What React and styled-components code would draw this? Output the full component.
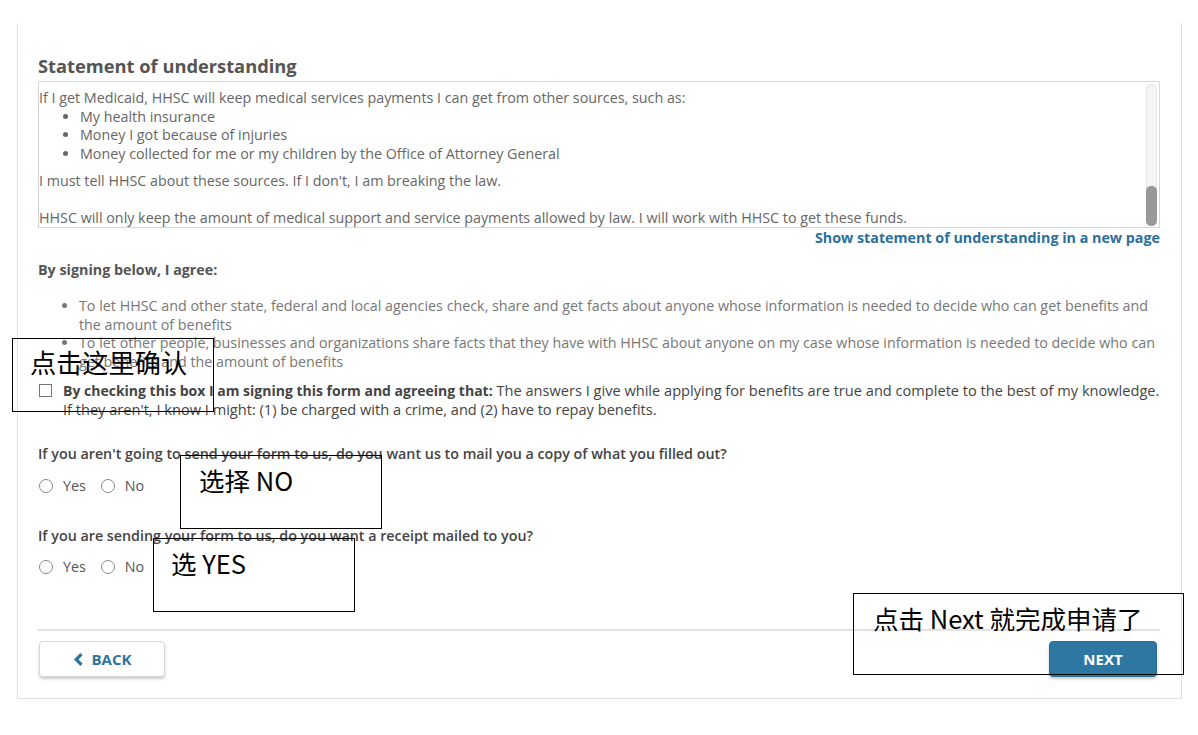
import React from 'react'
import styled, { createGlobalStyle } from 'styled-components'

const GlobalStyle = createGlobalStyle`
  html, body {
    margin: 0;
    padding: 0;
    background: #fff;
  }
  body {
    font-family: 'Open Sans', 'Noto Sans', 'Noto Sans CJK SC', sans-serif;
    color: #555;
  }
`

const Page = styled.div`
  position: relative;
  width: 1198px;
  height: 735px;
  overflow: hidden;
`

const Panel = styled.div`
  margin: 23px 0 0 17px;
  width: 1165px;
  height: 676px;
  box-sizing: border-box;
  border: 1px solid #e0e0e0;
  border-top: none;
  padding: 30px 21px 0 20px;
`

const Title = styled.h2`
  margin: 0 0 2px;
  font-size: 18.3px;
  font-weight: 700;
  color: #555;
  line-height: 26px;
`

const StatementBox = styled.div`
  position: relative;
  height: 147px;
  box-sizing: border-box;
  border: 1px solid #d6d6d6;
  font-size: 14.3px;
  color: #666;
  line-height: 18.7px;
  overflow: hidden;
  padding: 7px 20px 0 0;
`

const Para = styled.p`
  margin: 0 0 ${(p) => p.gap || 0}px;
`

const SmallList = styled.ul`
  margin: 0 0 8px;
  padding-left: 41px;
  list-style: disc;
`

const ScrollTrack = styled.div`
  position: absolute;
  top: 2px;
  right: 2px;
  bottom: 1px;
  width: 9px;
  border: 1px solid #e4e4e4;
  border-radius: 5px;
  background: #f4f4f4;
`

const ScrollThumb = styled.div`
  position: absolute;
  left: -1px;
  right: -1px;
  bottom: -1px;
  height: 40px;
  border-radius: 5px;
  background: #999;
`

const NewPageLink = styled.a`
  display: block;
  text-align: right;
  font-size: 14.3px;
  font-weight: 700;
  color: #2b6f9b;
  text-decoration: none;
  line-height: 20px;
`

const AgreeHeading = styled.div`
  margin-top: 13px;
  font-size: 14.3px;
  font-weight: 700;
  color: #555;
  line-height: 18px;
`

const AgreeList = styled.ul`
  margin: 18px 0 0;
  padding-left: 41px;
  font-size: 14.3px;
  color: #777;
  line-height: 18.5px;
`

const CheckRow = styled.label`
  display: flex;
  align-items: flex-start;
  gap: 11px;
  margin-top: 10px;
  padding-left: 1px;
  font-size: 14.6px;
  color: #444;
  line-height: 19px;

  b {
    font-size: 14px;
  }
`

const CheckText = styled.span`
  margin-right: -9px;
`

const Box = styled.span`
  flex: none;
  width: 13px;
  height: 13px;
  margin-top: 3px;
  border: 1px solid #777;
  box-sizing: border-box;
  background: #fff;
`

const Question = styled.div`
  margin-top: ${(p) => p.top}px;
  font-size: 14.3px;
  font-weight: 600;
  color: #444;
  line-height: 18px;
`

const RadioRow = styled.div`
  display: flex;
  align-items: center;
  margin-top: ${(p) => p.top}px;
  padding-left: 1px;
  font-size: 14.3px;
  color: #555;
`

const Radio = styled.span`
  width: 14px;
  height: 14px;
  border-radius: 50%;
  border: 1px solid #8a8a8a;
  box-sizing: border-box;
  margin-right: 10px;
`

const RadioLabel = styled.span`
  margin-right: 15px;
`

const Divider = styled.hr`
  margin: 53px 0 0;
  border: none;
  border-top: 2px solid #e2e2e2;
`

const Footer = styled.div`
  display: flex;
  justify-content: space-between;
  margin-top: 10px;
  padding: 0 3px 0 1px;
`

const Button = styled.button`
  height: 36px;
  width: ${(p) => p.w}px;
  border-radius: 4px;
  font-family: 'Open Sans', sans-serif;
  font-size: 15px;
  font-weight: 700;
  display: flex;
  align-items: center;
  justify-content: center;
  gap: 8px;
  cursor: pointer;
  border: 1px solid ${(p) => (p.primary ? '#2a6d96' : '#d8d8d8')};
  background: ${(p) => (p.primary ? '#2e77a3' : '#fff')};
  color: ${(p) => (p.primary ? '#fff' : '#2e74a0')};
  box-shadow: 0 2px 3px rgba(0, 0, 0, 0.2);
`

const Note = styled.div`
  position: absolute;
  left: ${(p) => p.x}px;
  top: ${(p) => p.y}px;
  width: ${(p) => p.w}px;
  height: ${(p) => p.h}px;
  box-sizing: border-box;
  border: 1px solid #000;
  padding: ${(p) => p.pt}px 0 0 ${(p) => p.pl}px;
  font-family: 'Noto Sans CJK SC', 'Open Sans', sans-serif;
  font-size: ${(p) => p.fs || 25.5}px;
  line-height: 30px;
  color: #000;
  white-space: nowrap;
`

const ChevronLeft = () => (
  <svg width="11" height="13" viewBox="0 0 11 13">
    <path d="M8.5 1.2 L3.2 6.5 L8.5 11.8" fill="none" stroke="#2e74a0" strokeWidth="3.2" />
  </svg>
)

const agreeItems = [
  'To let HHSC and other state, federal and local agencies check, share and get facts about anyone whose information is needed to decide who can get benefits and the amount of benefits',
  'To let other people, businesses and organizations share facts that they have with HHSC about anyone on my case whose information is needed to decide who can get benefits and the amount of benefits',
]

const YesNo = ({ top }) => (
  <RadioRow top={top}>
    <Radio />
    <RadioLabel>Yes</RadioLabel>
    <Radio />
    <RadioLabel>No</RadioLabel>
  </RadioRow>
)

const App = () => {
  return (
    <Page>
      <GlobalStyle />
      <Panel>
        <Title>Statement of understanding</Title>
        <StatementBox>
          <Para>If I get Medicaid, HHSC will keep medical services payments I can get from other sources, such as:</Para>
          <SmallList>
            <li>My health insurance</li>
            <li>Money I got because of injuries</li>
            <li>Money collected for me or my children by the Office of Attorney General</li>
          </SmallList>
          <Para gap={18}>I must tell HHSC about these sources. If I don't, I am breaking the law.</Para>
          <Para>HHSC will only keep the amount of medical support and service payments allowed by law. I will work with HHSC to get these funds.</Para>
          <ScrollTrack>
            <ScrollThumb />
          </ScrollTrack>
        </StatementBox>
        <NewPageLink href="#">Show statement of understanding in a new page</NewPageLink>

        <AgreeHeading>By signing below, I agree:</AgreeHeading>
        <AgreeList>
          {agreeItems.map((t) => (
            <li key={t}>{t}</li>
          ))}
        </AgreeList>

        <CheckRow>
          <Box />
          <CheckText>
            <b>By checking this box I am signing this form and agreeing that:</b> The answers I give while applying for
            benefits are true and complete to the best of my knowledge. If they aren't, I know I might: (1) be charged
            with a crime, and (2) have to repay benefits.
          </CheckText>
        </CheckRow>

        <Question top={26}>If you aren't going to send your form to us, do you want us to mail you a copy of what you filled out?</Question>
        <YesNo top={13} />

        <Question top={32}>If you are sending your form to us, do you want a receipt mailed to you?</Question>
        <YesNo top={12} />

        <Divider />
        <Footer>
          <Button w={126}>
            <ChevronLeft />
            BACK
          </Button>
          <Button primary w={108}>
            NEXT
          </Button>
        </Footer>
      </Panel>

      <Note x={12} y={338} w={202} h={74} pt={8} pl={17} fs={26.2}>点击这里确认</Note>
      <Note x={180} y={455} w={202} h={74} pt={9} pl={18}>选择 NO</Note>
      <Note x={153} y={538} w={202} h={74} pt={9} pl={17}>选 YES</Note>
      <Note x={853} y={593} w={331} h={82} pt={9} pl={19}>点击 Next 就完成申请了</Note>
    </Page>
  )
}

export default App
